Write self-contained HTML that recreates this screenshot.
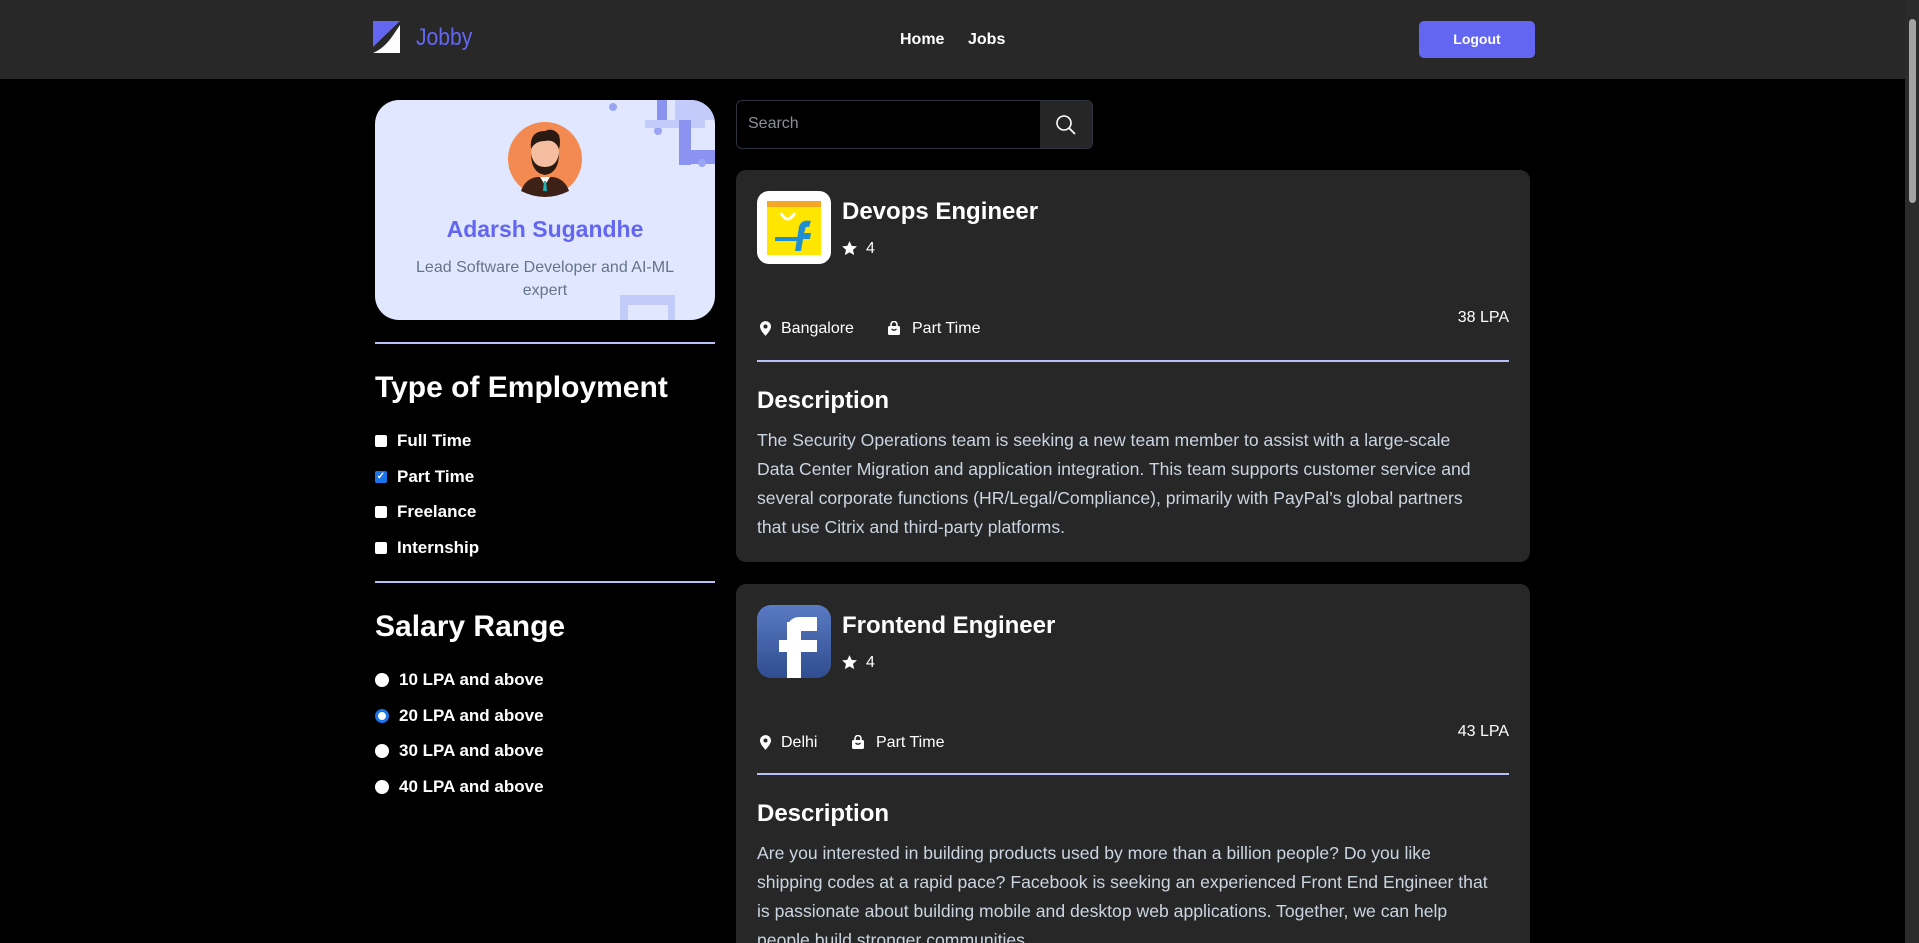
<!DOCTYPE html>
<html style="overflow:hidden;height:943px"><head><meta charset="utf-8"><style>
*{margin:0;padding:0;box-sizing:border-box}
body{width:1919px;height:943px;background:#000;font-family:"Liberation Sans",sans-serif;position:relative;overflow:hidden;color:#fff}
.a{position:absolute}
.hdr{left:0;top:0;width:1905px;height:79px;background:#282828}
.sb{left:1905px;top:0;width:14px;height:943px;background:#2b2b2b}
.thumb{left:1909px;top:19px;width:7px;height:184px;background:#a3a3a3;border-radius:4px}
.nav{font-weight:bold;font-size:16px;top:31px}
.btn{left:1419px;top:21px;width:116px;height:37px;background:#6366f1;border-radius:5px;font-weight:bold;font-size:14px;text-align:center;line-height:37px}
.prof{left:375px;top:100px;width:340px;height:220px;background:#e0e7ff;border-radius:24px;overflow:hidden}
.hr{height:2px;background:#b6c1f7}
h2{font-size:30px;font-weight:bold;position:absolute;left:375px}
.opt{position:absolute;left:375px;font-size:17px;font-weight:bold;display:flex;align-items:center}
.cb{width:12px;height:12px;background:#fff;border-radius:2px;margin-right:10px}
.rd{width:14px;height:14px;background:#fff;border-radius:50%;margin-right:10px}
.card{left:736px;width:794px;background:#272727;border-radius:10px}
.title{font-size:24px;font-weight:bold}
.desc{font-size:17.6px;line-height:29px;color:#cbd5e1}
.sm{font-size:16px}
</style></head><body>
<div class="a hdr"></div>
<div class="a sb"></div><div class="a thumb"></div>
<svg class="a" style="left:373px;top:21px" width="27" height="32" viewBox="0 0 27 32"><polygon points="0,0 27,0 0,26" fill="#6366f1"/><path d="M27,4 L27,32 L0,32 C14,26 20,14 27,4Z" fill="#fff"/></svg>
<div class="a" style="left:416px;top:24px;font-size:24px;color:#6366f1;transform:scaleX(0.88);transform-origin:left">Jobby</div>
<div class="a nav" style="left:900px">Home</div>
<div class="a nav" style="left:968px">Jobs</div>
<div class="a btn">Logout</div>

<div class="a prof">
<svg class="a" style="left:0;top:0" width="340" height="220"><circle cx="238" cy="7" r="4" fill="#9aa5f5"/><circle cx="283" cy="31" r="4" fill="#9aa5f5"/><rect x="282" y="0" width="10" height="20" fill="#8b93f0"/><rect x="300" y="0" width="40" height="20" fill="#c3cbfb"/><rect x="270" y="20" width="60" height="8" fill="#c3cbfb"/><rect x="304" y="20" width="12" height="45" fill="#8b93f0"/><rect x="304" y="50" width="36" height="14" fill="#8b93f0"/><circle cx="327" cy="63" r="4" fill="#9aa5f5"/><rect x="245" y="195" width="55" height="25" fill="#c3cbfb"/><rect x="253" y="205" width="40" height="15" fill="#e0e7ff"/></svg>
<svg class="a" style="left:132px;top:21px" width="76" height="76" viewBox="0 0 76 76"><circle cx="38" cy="38" r="37" fill="#f28a52"/><path d="M14,70 Q18,58 30,56 L46,56 Q58,58 62,70 Q50,76 38,76 Q26,76 14,70Z" fill="#3d2116"/><path d="M33,56 L38,64 L43,56Z" fill="#fff"/><path d="M37,60 L39,60 L40,70 L36,70Z" fill="#1fb3b3"/><ellipse cx="38" cy="33" rx="14" ry="18" fill="#f6bea0"/><path d="M24,32 Q24,52 38,54 Q52,52 52,32 Q50,46 38,46 Q26,46 24,32Z" fill="#2b1a12"/><path d="M24,28 Q22,10 38,10 Q46,6 52,14 Q54,22 52,28 Q48,18 38,20 Q28,20 24,28Z" fill="#2b1a12"/></svg>
<div class="a" style="left:0;width:340px;top:116px;text-align:center;font-size:23px;font-weight:bold;color:#6366f1">Adarsh Sugandhe</div>
<div class="a" style="left:30px;width:280px;top:156px;text-align:center;font-size:16px;line-height:23px;color:#64748b">Lead Software Developer and AI-ML expert</div>
</div>

<div class="a hr" style="left:375px;top:342px;width:340px"></div>
<h2 style="top:371px">Type of Employment</h2>
<div class="opt" style="top:431px"><span class="cb"></span>Full Time</div>
<div class="opt" style="top:467px"><span class="cb" style="background:#1a73e8;color:#fff;font-size:10px;line-height:12px;text-align:center">✓</span>Part Time</div>
<div class="opt" style="top:502px"><span class="cb"></span>Freelance</div>
<div class="opt" style="top:538px"><span class="cb"></span>Internship</div>
<div class="a hr" style="left:375px;top:581px;width:340px"></div>
<h2 style="top:610px">Salary Range</h2>
<div class="opt" style="top:670px"><span class="rd"></span>10 LPA and above</div>
<div class="opt" style="top:706px"><span class="rd" style="border:3px solid #1a73e8;background:#fff;box-shadow:inset 0 0 0 1px #fff"></span>20 LPA and above</div>
<div class="opt" style="top:741px"><span class="rd"></span>30 LPA and above</div>
<div class="opt" style="top:777px"><span class="rd"></span>40 LPA and above</div>

<div class="a" style="left:736px;top:100px;width:357px;height:49px;border:1px solid #2c3440;border-radius:6px;background:#000;overflow:hidden">
<div class="a" style="left:11px;top:14px;font-size:16px;color:#8a8f98">Search</div>
<div class="a" style="left:303px;top:0;width:54px;height:49px;background:#262626"></div>
<svg class="a" style="left:318px;top:13px" width="22" height="22" viewBox="0 0 22 22"><circle cx="9" cy="9" r="7" stroke="#fff" stroke-width="1.6" fill="none"/><path d="M14,14 L20,20" stroke="#fff" stroke-width="1.8"/></svg>
</div>

<svg width="0" height="0" style="position:absolute"><defs>
<symbol id="pin" viewBox="0 0 12 16"><path d="M6,0 C2.7,0 0,2.6 0,5.8 C0,10 6,16 6,16 C6,16 12,10 12,5.8 C12,2.6 9.3,0 6,0Z M6,8 A2.2,2.2 0 1 1 6,3.6 A2.2,2.2 0 1 1 6,8Z" fill="#fff" fill-rule="evenodd"/></symbol>
<symbol id="bag" viewBox="0 0 14 14"><path d="M4,5 L4,3.5 A3,3 0 0 1 10,3.5 L10,5" stroke="#fff" stroke-width="1.6" fill="none"/><rect x="1" y="5" width="12" height="9" rx="1.5" fill="#fff"/><path d="M4.5,8 Q7,10.5 9.5,8" stroke="#272727" stroke-width="1.3" fill="none"/></symbol>
</defs></svg>

<div class="a card" style="top:170px;height:392px">
<div class="a" style="left:21px;top:21px;width:74px;height:73px;background:#fff;border-radius:12px"></div>
<svg class="a" style="left:29px;top:29px" width="58" height="58" viewBox="0 0 58 58"><rect x="2" y="6" width="54" height="50" fill="#ffe600"/><rect x="2" y="2" width="54" height="6" fill="#f5a623"/><path d="M16,14 Q22,26 30,14" stroke="#fff" stroke-width="3" fill="none"/><path d="M30,52 L34,28 Q36,20 46,22 L44,28 Q40,27 40,31 L39,34 L46,34 L45,40 L38,40 L36,52Z" fill="#1f8fd1"/><path d="M10,38 L36,38 L35,42 L10,42Z" fill="#1f8fd1"/></svg>
<div class="a title" style="left:106px;top:28px">Devops Engineer</div>
<svg class="a" style="left:105px;top:70px" width="17" height="17" viewBox="0 0 24 24"><path d="M12,1.5 L15.1,8.3 L22.5,9 L16.9,14 L18.6,21.3 L12,17.4 L5.4,21.3 L7.1,14 L1.5,9 L8.9,8.3Z" fill="#fff"/></svg>
<div class="a sm" style="left:130px;top:70px">4</div>
<svg class="a" style="left:24px;top:151px" width="11" height="15"><use href="#pin"/></svg>
<div class="a sm" style="left:45px;top:150px">Bangalore</div>
<svg class="a" style="left:151px;top:151px" width="14" height="14"><use href="#bag"/></svg>
<div class="a sm" style="left:176px;top:150px">Part Time</div>
<div class="a sm" style="right:21px;top:139px">38 LPA</div>
<div class="a hr" style="left:21px;top:190px;width:752px"></div>
<div class="a title" style="left:21px;top:217px">Description</div>
<div class="a desc" style="left:21px;top:256px;width:770px">The Security Operations team is seeking a new team member to assist with a large-scale<br>Data Center Migration and application integration. This team supports customer service and<br>several corporate functions (HR/Legal/Compliance), primarily with PayPal’s global partners<br>that use Citrix and third-party platforms.</div>
</div>

<div class="a card" style="top:584px;height:359px;border-radius:10px 10px 0 0;overflow:hidden">
<div class="a" style="left:21px;top:21px;width:74px;height:73px;border-radius:14px;background:linear-gradient(#5a7bc4,#2f4d8f);overflow:hidden"><div class="a" style="left:30px;top:17px;width:14px;height:56px;background:#fff"></div><div class="a" style="left:30px;top:12px;width:30px;height:14px;background:#fff;border-radius:12px 0 0 0"></div><div class="a" style="left:22px;top:35px;width:38px;height:12px;background:#fff"></div></div>
<div class="a title" style="left:106px;top:28px">Frontend Engineer</div>
<svg class="a" style="left:105px;top:70px" width="17" height="17" viewBox="0 0 24 24"><path d="M12,1.5 L15.1,8.3 L22.5,9 L16.9,14 L18.6,21.3 L12,17.4 L5.4,21.3 L7.1,14 L1.5,9 L8.9,8.3Z" fill="#fff"/></svg>
<div class="a sm" style="left:130px;top:70px">4</div>
<svg class="a" style="left:24px;top:151px" width="11" height="15"><use href="#pin"/></svg>
<div class="a sm" style="left:45px;top:150px">Delhi</div>
<svg class="a" style="left:115px;top:151px" width="14" height="14"><use href="#bag"/></svg>
<div class="a sm" style="left:140px;top:150px">Part Time</div>
<div class="a sm" style="right:21px;top:139px">43 LPA</div>
<div class="a hr" style="left:21px;top:189px;width:752px"></div>
<div class="a title" style="left:21px;top:216px">Description</div>
<div class="a desc" style="left:21px;top:255px;width:770px">Are you interested in building products used by more than a billion people? Do you like<br>shipping codes at a rapid pace? Facebook is seeking an experienced Front End Engineer that<br>is passionate about building mobile and desktop web applications. Together, we can help<br>people build stronger communities.</div>
</div>
</body></html>
